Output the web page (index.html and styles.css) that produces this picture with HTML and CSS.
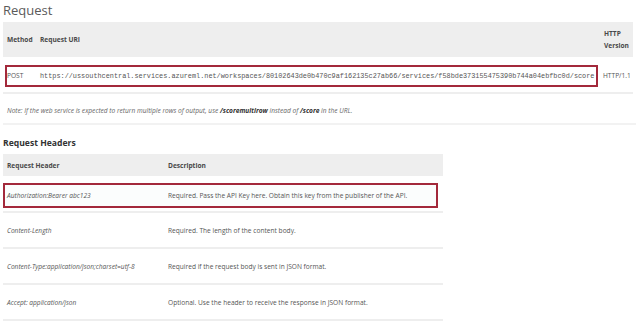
FILE: index.html
```html
<!DOCTYPE html>
<html lang="en">
<head>
<meta charset="utf-8">
<title>Request</title>
<link rel="stylesheet" href="styles.css">
</head>
<body>
  <h1 class="page-title">Request</h1>

  <section class="uri-table">
    <div class="uri-head">
      <div class="col-method">Method</div>
      <div class="col-uri">Request URI</div>
      <div class="col-version">HTTP Version</div>
    </div>
    <div class="uri-row">
      <div class="uri-box">
        <div class="col-method">POST</div>
        <div class="col-uri uri-text">https://ussouthcentral.services.azureml.net/workspaces/80102643de0b470c9af162135c27ab66/services/f58bde373155475390b744a04ebfbc0d/score</div>
      </div>
      <div class="col-version">HTTP/1.1</div>
    </div>
  </section>

  <p class="note">Note: If the web service is expected to return multiple rows of output, use <b>/scoremultirow</b> instead of <b>/score</b> in the URL.</p>

  <h2 class="section-title">Request Headers</h2>

  <section class="hdr-table">
    <div class="hdr-head">
      <div class="cell">Request Header</div>
      <div class="cell">Description</div>
    </div>
    <div class="hdr-row hdr-row-first">
      <div class="hdr-box">
        <div class="cell name">Authorization:Bearer abc123</div>
        <div class="cell">Required. Pass the API Key here. Obtain this key from the publisher of the API.</div>
      </div>
    </div>
    <div class="hdr-row">
      <div class="cell name">Content-Length</div>
      <div class="cell">Required. The length of the content body.</div>
    </div>
    <div class="hdr-row">
      <div class="cell name">Content-Type:application/json;charset=utf-8</div>
      <div class="cell">Required if the request body is sent in JSON format.</div>
    </div>
    <div class="hdr-row">
      <div class="cell name">Accept: application/json</div>
      <div class="cell">Optional. Use the header to receive the response in JSON format.</div>
    </div>
  </section>
</body>
</html>
```

FILE: styles.css
```css
html, body {
  margin: 0;
  background: #ffffff;
}

body {
  padding: 0 3px;
  font-family: "Open Sans", "Noto Sans", sans-serif;
  font-size: 6.6px;
  color: #555555;
}

.page-title {
  margin: 0 0 2px;
  font-size: 13px;
  font-weight: 400;
  line-height: 20px;
  color: #5a5a5a;
}

/* Request URI table */
.uri-table {
  margin-right: 3px;
}

.uri-head {
  display: flex;
  align-items: center;
  height: 35px;
  background: #eeeeee;
  font-weight: 700;
  color: #484848;
}

.uri-head .col-method {
  width: 37px;
  padding-left: 4px;
  box-sizing: border-box;
}

.uri-head .col-uri {
  flex: 1;
}

.uri-head .col-version {
  width: 29px;
  line-height: 12px;
}

.uri-row {
  display: flex;
  align-items: center;
  height: 37px;
  padding-top: 2px;
  box-sizing: border-box;
  border-bottom: 2px solid #eeeeee;
}

.uri-box {
  display: flex;
  align-items: center;
  width: 593px;
  height: 22px;
  margin-left: 2px;
  box-sizing: border-box;
  border: 2px solid #a3293b;
}

.uri-box .col-method {
  width: 33px;
}

.uri-text {
  font-family: "Liberation Mono", "DejaVu Sans Mono", monospace;
  font-size: 6.85px;
  white-space: nowrap;
}

.uri-row .col-version {
  margin-left: 5px;
}

.note {
  margin: 0;
  padding: 12px 4px 7px;
  line-height: 10px;
  font-style: italic;
  color: #666666;
  border-bottom: 2px solid #f2f2f2;
}

.note b {
  color: #333333;
}

.section-title {
  margin: 12px 0 5px;
  font-size: 8.6px;
  font-weight: 700;
  line-height: 12px;
  color: #333333;
}

/* Request headers table */
.hdr-table {
  width: 440px;
}

.hdr-head,
.hdr-row,
.hdr-box {
  display: grid;
  grid-template-columns: 161px 1fr;
  align-items: center;
}

.hdr-head {
  height: 22px;
  background: #eeeeee;
  font-weight: 700;
  color: #484848;
}

.cell {
  padding-left: 4px;
}

.hdr-row {
  height: 36px;
  box-sizing: border-box;
  border-bottom: 2px solid #eeeeee;
}

.hdr-row-first {
  display: block;
  height: 37px;
  padding: 7px 5px 0 0;
}

.hdr-box {
  height: 25px;
  box-sizing: border-box;
  border: 2px solid #a3293b;
  background: #fbfdfd;
}

.hdr-box .cell {
  padding-left: 2px;
}

.name {
  font-style: italic;
}
```
